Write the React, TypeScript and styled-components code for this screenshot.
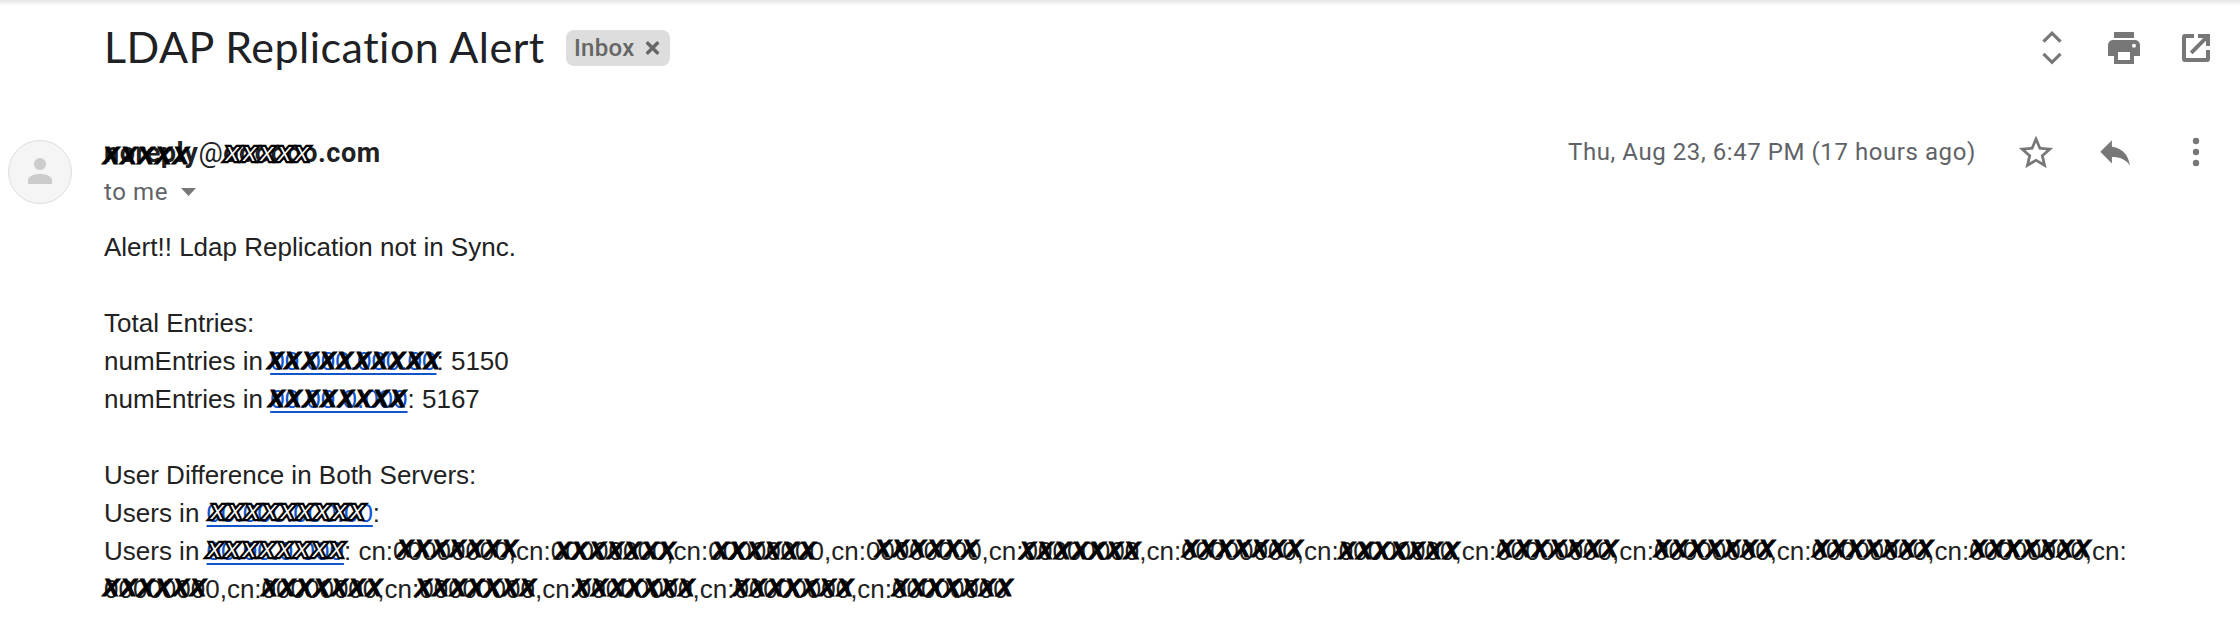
import React from "react";
import styled, { createGlobalStyle } from "styled-components";

const Global = createGlobalStyle`
  * { box-sizing: border-box; }
  body { margin: 0; background: #fff; font-family: Roboto, sans-serif; }
`;

const Page = styled.main`
  width: 2240px;
  height: 628px;
  overflow: hidden;
  background: #fff;
`;

const TopShade = styled.div`
  height: 6px;
  background: linear-gradient(#e4e4e4, #fff);
`;

const SubjectBar = styled.header`
  display: flex;
  align-items: center;
  height: 84px;
  padding: 0 28px 0 104px;
`;

const Subject = styled.h1`
  margin: -2px 22px 0 0;
  width: 440px;
  font: 400 43px/60px Lato, sans-serif;
  letter-spacing: 0.5px;
  white-space: nowrap;
  color: #202124;
`;

const Chip = styled.span`
  display: flex;
  align-items: center;
  justify-content: space-between;
  width: 104px;
  height: 36px;
  padding: 0 10px 0 8px;
  border-radius: 8px;
  background: #ddd;
  color: #666;
  font-size: 24px;
  font-weight: 500;
  letter-spacing: 0.3px;
`;

const Actions = styled.div`
  display: flex;
  align-items: center;
  gap: 40px;
  margin-left: auto;
`;

const Glyph = styled.svg<{ $fill?: string }>`
  display: block;
  flex: none;
  fill: ${(p) => p.$fill ?? "#777"};
`;

const SenderBar = styled.section`
  display: flex;
  height: 131px;
  padding: 42px 26px 0 8px;
`;

const Avatar = styled.div`
  display: flex;
  align-items: center;
  justify-content: center;
  width: 64px;
  height: 64px;
  margin: 8px 32px 0 0;
  border: 1px solid #ddd;
  border-radius: 50%;
  background: #f5f5f5;
`;

const Sender = styled.div`
  display: flex;
  flex-direction: column;
`;

const Address = styled.div`
  padding-top: 1px;
  font: 700 27px/40px Roboto, sans-serif;
  letter-spacing: 0.55px;
  color: #202124;
  white-space: nowrap;
`;

const At = styled.span`
  font-weight: 400;
`;

const Recipient = styled.div`
  display: flex;
  align-items: center;
  gap: 13px;
  font-size: 24px;
  line-height: 38px;
  letter-spacing: 0.6px;
  color: #5f6368;
`;

const Meta = styled.div`
  display: flex;
  align-items: center;
  gap: 44px;
  height: 40px;
  margin-left: auto;
`;

const Time = styled.time`
  width: 406px;
  font-size: 24px;
  letter-spacing: 0.57px;
  white-space: nowrap;
  color: #5f6368;
`;

const Body = styled.article`
  padding: 7px 104px 0;
  font: 26px/38px "Liberation Sans", Arial, sans-serif;
  color: #222;
`;

const Line = styled.div`
  height: 38px;
  white-space: nowrap;
`;

const Link = styled.a`
  color: #15c;
  text-decoration: underline 2px;
  text-underline-offset: 3px;
`;

const Masked = styled.span`
  position: relative;
`;

const Crosses = styled.span<{ $x: number; $y: number; $hollow?: boolean }>`
  position: absolute;
  left: ${(p) => p.$x}px;
  top: ${(p) => p.$y - 4}px;
  font: italic ${(p) => (p.$hollow ? "400 20px" : "700 24px")}/38px "Liberation Sans", Arial, sans-serif;
  letter-spacing: ${(p) => (p.$hollow ? 4.1 : 1.4)}px;
  color: ${(p) => (p.$hollow ? "#fff" : "#000")};
  -webkit-text-stroke: ${(p) => (p.$hollow ? 4.5 : 1)}px #000;
  paint-order: stroke fill;
  white-space: nowrap;
`;

type Cover = { count: number; x: number; y: number; hollow?: boolean };

const Mask = ({ text, count, x, y, hollow }: Cover & { text: string }) => (
  <Masked>
    {text}
    <Crosses $x={x} $y={y} $hollow={hollow}>{"X".repeat(count)}</Crosses>
  </Masked>
);

const rowOne: Cover[] = [
  { count: 7, x: 4, y: -2 },
  { count: 7, x: 4, y: 0 },
  { count: 6, x: 4, y: 0 },
  { count: 6, x: 9, y: -2 },
  { count: 7, x: -4, y: 0 },
  { count: 7, x: 1, y: -2 },
  { count: 7, x: 0, y: 0 },
  { count: 7, x: 1, y: -2 },
  { count: 7, x: 0, y: -2 },
  { count: 7, x: 1, y: -2 },
  { count: 7, x: 1, y: -2 },
];

const rowTwo: Cover[] = [
  { count: 6, x: -1, y: -1 },
  { count: 7, x: 0, y: -1 },
  { count: 7, x: -4, y: -1 },
  { count: 7, x: -3, y: -1 },
  { count: 7, x: -2, y: -1 },
  { count: 7, x: 0, y: -1 },
];

const UnfoldIcon = () => (
  <Glyph width="32" height="36" viewBox="0 0 32 36">
    <path d="M7.5 11.7L16 3.2L24.5 11.7M7.5 23.8L16 32.3L24.5 23.8" fill="none" stroke="#777" strokeWidth="3.2" />
  </Glyph>
);

const PrintIcon = () => (
  <Glyph width="32" height="36" viewBox="0 0 32 36">
    <path
      fillRule="evenodd"
      d="M6 2h20v6H6zM5 10h22a5 5 0 0 1 5 5v11h-6v8H6v-8H0V15a5 5 0 0 1 5-5zM10 22v8h12v-8zM26 13.7a2 2 0 1 0 0 4a2 2 0 1 0 0-4z"
    />
  </Glyph>
);

const OpenIcon = () => (
  <Glyph width="32" height="36" viewBox="0 0 32 36">
    <path d="M14 4v4H6v20h20v-8h4v9a3 3 0 0 1-3 3H5a3 3 0 0 1-3-3V7a3 3 0 0 1 3-3zM18 4h12v12h-4v-5.2L12.6 24.2L9.8 21.4L23.2 8H18z" />
  </Glyph>
);

const StarIcon = () => (
  <Glyph width="36" height="36" viewBox="1.55 1.1 20.9 20.9">
    <path d="M22 9.24l-7.19-.62L12 2 9.19 8.63 2 9.24l5.46 4.73L5.82 21 12 17.27 18.18 21l-1.63-7.03L22 9.24zM12 15.4l-3.76 2.27 1-4.28-3.32-2.88 4.38-.38L12 6.1l1.71 4.04 4.38.38-3.32 2.88 1 4.28L12 15.4z" />
  </Glyph>
);

const ReplyIcon = () => (
  <Glyph width="36" height="36" viewBox="0 0 36 36">
    <path d="M2.3 17.8L13.9 6.2V12.8C25.2 14.3 30.3 21.5 31.9 31.4C27.8 25.5 22 23 13.9 23V29.6z" />
  </Glyph>
);

const MoreIcon = () => (
  <Glyph width="36" height="36" viewBox="0 0 36 36">
    <circle cx="18" cy="7" r="3.2" />
    <circle cx="18" cy="18" r="3.2" />
    <circle cx="18" cy="29" r="3.2" />
  </Glyph>
);

export default function App() {
  return (
    <Page>
      <Global />
      <TopShade />
      <SubjectBar>
        <Subject>LDAP Replication Alert</Subject>
        <Chip>
          Inbox
          <Glyph width="15" height="16" viewBox="0 0 15 16">
            <path d="M1.7 2.2L13.3 13.8M13.3 2.2L1.7 13.8" stroke="#666" strokeWidth="3.4" />
          </Glyph>
        </Chip>
        <Actions>
          <UnfoldIcon />
          <PrintIcon />
          <OpenIcon />
        </Actions>
      </SubjectBar>
      <SenderBar>
        <Avatar>
          <Glyph width="24" height="28" viewBox="0 0 24 28" $fill="#ccc">
            <circle cx="12" cy="6" r="6" />
            <path d="M0 26v-3.5C0 18 6 16 12 16s12 2 12 6.500V26z" />
          </Glyph>
        </Avatar>
        <Sender>
          <Address>
            <Mask text="norepl" count={5} x={-1} y={4} />y<At>@</At>
            <Mask text="oooooo" count={5} x={2} y={2} hollow />.com
          </Address>
          <Recipient>
            to me
            <Glyph width="15" height="8" viewBox="0 0 15 8">
              <path d="M0 0h15L7.500 8z" />
            </Glyph>
          </Recipient>
        </Sender>
        <Meta>
          <Time>Thu, Aug 23, 6:47 PM (17 hours ago)</Time>
          <StarIcon />
          <ReplyIcon />
          <MoreIcon />
        </Meta>
      </SenderBar>
      <Body>
        <Line>Alert!! Ldap Replication not in Sync.</Line>
        <Line />
        <Line>Total Entries:</Line>
        <Line>
          numEntries in <Link><Mask text="00.000.000.00" count={10} x={-3} y={0} /></Link>: 5150
        </Line>
        <Line>
          numEntries in <Link><Mask text="00.00.0.000" count={8} x={-2} y={0} /></Link>: 5167
        </Line>
        <Line />
        <Line>User Difference in Both Servers:</Line>
        <Line>
          Users in <Link><Mask text="00.000.000.00" count={9} x={4} y={-1} hollow /></Link>:
        </Line>
        <Line>
          Users in <Link><Mask text="00.00.0.000" count={8} x={1} y={-1} hollow /></Link>: cn:
          {rowOne.map((cover, i) => (
            <React.Fragment key={i}>
              <Mask text="00000000" {...cover} />,cn:
            </React.Fragment>
          ))}
        </Line>
        <Line>
          {rowTwo.map((cover, i) => (
            <React.Fragment key={i}>
              {i > 0 && ",cn:"}
              <Mask text="00000000" {...cover} />
            </React.Fragment>
          ))}
        </Line>
      </Body>
    </Page>
  );
}
